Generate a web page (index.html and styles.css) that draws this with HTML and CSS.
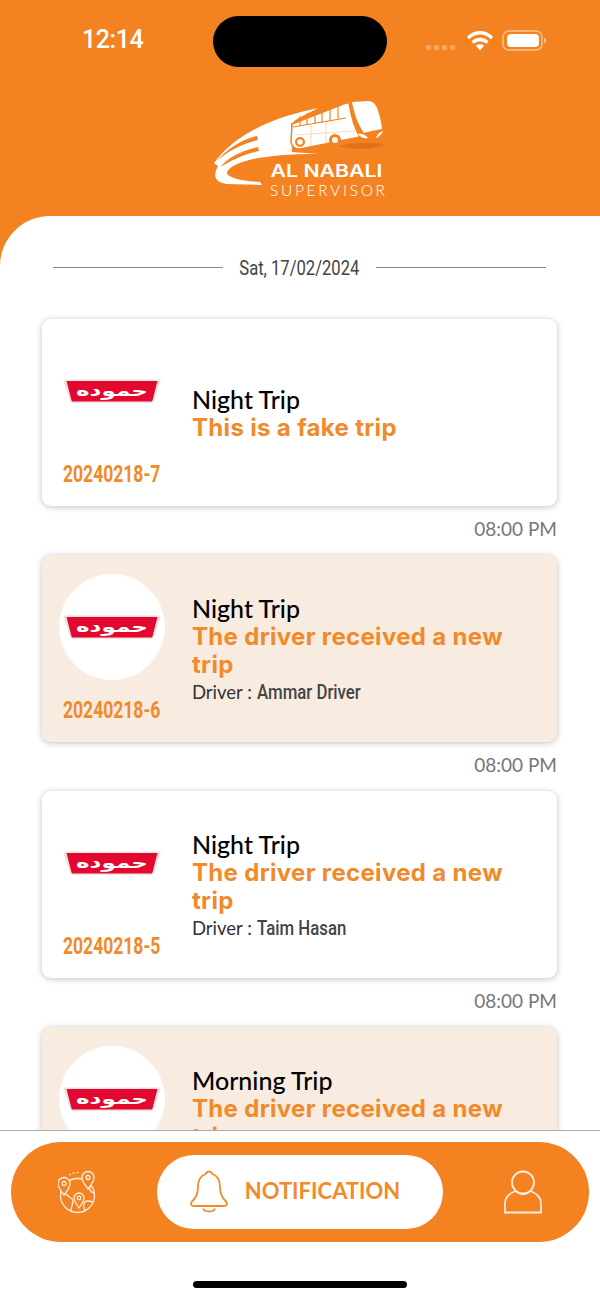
FILE: index.html
```html
<!DOCTYPE html>
<html lang="en">
<head>
  <meta charset="UTF-8" />
  <meta name="viewport" content="width=device-width, initial-scale=1.0"/>
  <title>Notification | Al Nabali Supervisor</title>
  <link rel="stylesheet" href="styles.css">
</head>
<body>

  <div class="screen">
    <header class="top">
      <div class="status">
        <span class="clock">12:14</span>
        <div class="island"></div>
        <div class="status-icons">
          <div class="signal"><i></i><i></i><i></i><i></i></div>
          <svg class="wifi" width="28" height="24" viewBox="0 0 28 24">
            <path d="M2 10C9 3 19 3 26 10M6.500 14.500C11 10.500 17 10.500 21.500 14.500" fill="none" stroke="#fff" stroke-width="3.400"/>
            <path d="M9.800 17.500C12.500 15.500 15.500 15.500 18.200 17.500L14 22.500Z" fill="#fff"/>
          </svg>
          <svg class="battery" width="46" height="24" viewBox="0 0 46 24">
            <rect x="1" y="3" width="39" height="19" rx="6" fill="none" stroke="#fbc48f" stroke-width="1.500"/>
            <rect x="5" y="6" width="32" height="13" rx="4" fill="#fff"/>
            <path d="M42 10C45 10.500 45 14.500 42 15Z" fill="#fbc48f"/>
          </svg>
        </div>
      </div>
      <svg class="brand" width="200" height="115" viewBox="200 90 200 115">
        <path d="M318 108C285 115 240 128 214 163L218 166C213 175 214 182 226 184L262 185L260 182C240 181 226 177 227 172C232 162 260 154 318 154L292 152L291 124L297 119Z" fill="#fff"/>
        <path d="M257 136C240 140 226 150 217 161C228 151 242 144 258 140ZM258 147C240 151 228 158 220 167C232 160 244 154 259 151Z" fill="#f58220"/>
        <path d="M340 146C355 142 372 143 384 144C375 150 350 150 340 146Z" fill="#e0701c"/>
        <path d="M292 124L346 103H349C351 115 354 128 360 137L300 149Q292 149 291 142Z" fill="#fff" stroke="#f58220" stroke-width="1.500"/>
        <path d="M352 102L369 101Q375 102 377 108C380 115 381 122 382 129C375 130 368 132 364 133C358 125 354 113 352 102Z" fill="#fff"/>
        <path d="M293 127L346 118M300 116V126M307 113V125M315 110V124M322 108V123M330 106V121M338 104V120" fill="none" stroke="#f58220" stroke-width="1.200"/>
        <path d="M295 135L355 131M311 126V146M326 122V144" fill="none" stroke="#f9c7a0" stroke-width=".7"/>
        <circle cx="300" cy="142" r="5" fill="#f58220"/><circle cx="300" cy="142" r="2.800" fill="#fff"/>
        <circle cx="335" cy="140" r="6" fill="#f58220"/><circle cx="335" cy="140" r="3" fill="#fff"/>
        <path d="M358 134C362 133 366 135 368 138C364 139 360 137 358 134ZM383 131C382 134 379 137 376 138C377 134 380 132 383 131Z" fill="#fff"/>
        <text x="270.500" y="177" class="brand-name" textLength="112" lengthAdjust="spacingAndGlyphs">AL NABALI</text>
        <text x="270" y="196" class="brand-sub" textLength="115" lengthAdjust="spacing">SUPERVISOR</text>
      </svg>
    </header>

    <main class="panel">
      <div class="date-row">
        <span class="date-line"></span>
        <span class="date-text">Sat, 17/02/2024</span>
        <span class="date-line"></span>
      </div>

      <div class="feed">
        <article class="card">
          <div class="card-left">
            <div class="logo-wrap">
              <svg class="client" viewBox="0 0 98 26">
                <path d="M2 1.500H96Q98 1.500 97.400 4L91 23Q90.400 25 88 25H10Q7.600 25 7 23L.6 4Q0 1.500 2 1.500Z" fill="#f0e3e0"/>
                <path d="M3.500 3H94.500L89.500 22.500Q89 23.500 88 23.500H10Q9 23.500 8.500 22.500Z" fill="#e3082f"/>
                <text x="49" y="18" class="logo-word" text-anchor="middle" textLength="72" lengthAdjust="spacingAndGlyphs">حموده</text>
              </svg>
            </div>
            <span class="code">20240218-7</span>
          </div>
          <div class="card-body">
            <h3>Night Trip</h3>
            <p class="msg">This is a fake trip</p>
          </div>
        </article>
        <div class="time">08:00 PM</div>

        <article class="card unread">
          <div class="card-left">
            <div class="logo-wrap">
              <svg class="client" viewBox="0 0 98 26">
                <path d="M2 1.500H96Q98 1.500 97.400 4L91 23Q90.400 25 88 25H10Q7.600 25 7 23L.6 4Q0 1.500 2 1.500Z" fill="#f0e3e0"/>
                <path d="M3.500 3H94.500L89.500 22.500Q89 23.500 88 23.500H10Q9 23.500 8.500 22.500Z" fill="#e3082f"/>
                <text x="49" y="18" class="logo-word" text-anchor="middle" textLength="72" lengthAdjust="spacingAndGlyphs">حموده</text>
              </svg>
            </div>
            <span class="code">20240218-6</span>
          </div>
          <div class="card-body">
            <h3>Night Trip</h3>
            <p class="msg">The driver received a new trip</p>
            <p class="driver">Driver : <b>Ammar Driver</b></p>
          </div>
        </article>
        <div class="time">08:00 PM</div>

        <article class="card">
          <div class="card-left">
            <div class="logo-wrap">
              <svg class="client" viewBox="0 0 98 26">
                <path d="M2 1.500H96Q98 1.500 97.400 4L91 23Q90.400 25 88 25H10Q7.600 25 7 23L.6 4Q0 1.500 2 1.500Z" fill="#f0e3e0"/>
                <path d="M3.500 3H94.500L89.500 22.500Q89 23.500 88 23.500H10Q9 23.500 8.500 22.500Z" fill="#e3082f"/>
                <text x="49" y="18" class="logo-word" text-anchor="middle" textLength="72" lengthAdjust="spacingAndGlyphs">حموده</text>
              </svg>
            </div>
            <span class="code">20240218-5</span>
          </div>
          <div class="card-body">
            <h3>Night Trip</h3>
            <p class="msg">The driver received a new trip</p>
            <p class="driver">Driver : <b>Taim Hasan</b></p>
          </div>
        </article>
        <div class="time">08:00 PM</div>

        <article class="card unread">
          <div class="card-left">
            <div class="logo-wrap">
              <svg class="client" viewBox="0 0 98 26">
                <path d="M2 1.500H96Q98 1.500 97.400 4L91 23Q90.400 25 88 25H10Q7.600 25 7 23L.6 4Q0 1.500 2 1.500Z" fill="#f0e3e0"/>
                <path d="M3.500 3H94.500L89.500 22.500Q89 23.500 88 23.500H10Q9 23.500 8.500 22.500Z" fill="#e3082f"/>
                <text x="49" y="18" class="logo-word" text-anchor="middle" textLength="72" lengthAdjust="spacingAndGlyphs">حموده</text>
              </svg>
            </div>
          </div>
          <div class="card-body">
            <h3>Morning Trip</h3>
            <p class="msg">The driver received a new trip</p>
            <p class="driver">Driver :</p>
          </div>
        </article>
      </div>
    </main>

    <footer class="bottom">
      <nav class="tabs">
        <svg class="tab-icon" width="38" height="44" viewBox="0 0 38 44" fill="none" stroke="#fdeedd" stroke-width="1.300">
          <circle cx="19.500" cy="25.500" r="17"/>
          <path d="M3 22C8 22 10 27 14 29C17 31 13 35 13 41M36 23C32 22 30 19 33 15M27 41C26 37 24 35 27 32C29 30 32 31 35 32"/>
          <path d="M6 25C2 20 0 17 0 13.500A6 6 0 0 1 12 13.500C12 17 10 20 6 25Z" fill="#f58220"/><circle cx="6" cy="13.500" r="2"/>
          <path d="M30 19C26 14 24 11 24 7.500A6 6 0 0 1 36 7.500C36 11 34 14 30 19Z" fill="#f58220"/><circle cx="30" cy="7.500" r="2"/>
          <path d="M21 38C17.500 33 16 30.500 16 28A5 5 0 0 1 26 28C26 30.500 24.500 33 21 38Z" fill="#f58220"/><circle cx="21" cy="28" r="1.800"/>
          <path d="M11 5C14 3 18 2 22 3" stroke-dasharray="2 2"/>
        </svg>
        <div class="tab-active">
          <svg width="38" height="44" viewBox="0 0 38 44" fill="none" stroke="#f08a2a" stroke-width="1.800" stroke-linejoin="round">
            <path d="M19 1.500C21 1.500 22 3 22.500 4C28 6 30 11 30 17C30 24 33 29 36.500 32C37.500 34.500 36.500 36 34 36H4C1.500 36 .5 34.500 1.500 32C5 29 8 24 8 17C8 11 10 6 15.500 4C16 3 17 1.500 19 1.500Z"/>
            <path d="M13 38.500C14.500 42.500 23.500 42.500 25 38.500"/>
          </svg>
          <span class="tab-label">NOTIFICATION</span>
        </div>
        <svg class="tab-icon" width="38" height="44" viewBox="0 0 38 44" fill="none" stroke="#fdeedd" stroke-width="1.800">
          <circle cx="19" cy="12.500" r="11"/>
          <path d="M12 21C5 23 1 28 1 33V42.500H37V33C37 28 33 23 26 21C23 25 15 25 12 21Z"/>
        </svg>
      </nav>
      <div class="home-bar"></div>
    </footer>
  </div>

</body>
</html>
```

FILE: styles.css
```css
/* Reset and Base Styles */
* {
  margin: 0;
  padding: 0;
  box-sizing: border-box;
}

body {
  width: 600px;
  height: 1300px;
  overflow: hidden;
  font-family: 'Lato', sans-serif;
  background: #fff;
}

.screen {
  display: flex;
  flex-direction: column;
  height: 1300px;
  background: #f58220;
}

/* Header */
.top {
  height: 216px;
  flex-shrink: 0;
  display: flex;
  flex-direction: column;
  align-items: center;
}

.status {
  width: 100%;
  height: 74px;
  padding: 16px 50px 0 82px;
  display: flex;
  align-items: flex-start;
}

.clock {
  width: 131px;
  margin-top: 8px;
  color: #fff;
  font-family: 'Roboto', sans-serif;
  font-size: 25px;
  font-weight: 500;
  line-height: 32px;
  letter-spacing: -0.4px;
}

.island {
  width: 174px;
  height: 51px;
  border-radius: 26px;
  background: #000;
}

.status-icons {
  margin-left: 39px;
  margin-top: 12px;
  display: flex;
  align-items: flex-start;
}

.signal {
  display: flex;
  gap: 3px;
  margin-top: 17px;
  margin-right: 11px;
}

.signal i {
  width: 5px;
  height: 5px;
  border-radius: 1px;
  background: #fba660;
}

.battery {
  margin-left: 8px;
}

.brand {
  margin-top: 16px;
}

.brand-name {
  fill: #fff;
  font-family: 'Inter', sans-serif;
  font-size: 17px;
  font-weight: 600;
}

.brand-sub {
  fill: #fff;
  font-family: 'Lato', sans-serif;
  font-size: 15.500px;
  font-weight: 300;
}

/* White panel */
.panel {
  flex: 1;
  min-height: 0;
  overflow: hidden;
  background: #fff;
  border-top-left-radius: 50px;
  padding: 0 43px 0 42px;
}

.date-row {
  height: 103px;
  padding: 0 11px;
  display: flex;
  align-items: center;
  justify-content: space-between;
}

.date-line {
  width: 170px;
  height: 1px;
  background: #888;
  margin-top: -1px;
}

/* no condensed family here, so Roboto gets squeezed */
.date-text {
  display: inline-block;
  color: #444;
  font-family: 'Roboto', sans-serif;
  font-size: 20px;
  white-space: nowrap;
  transform: scaleX(0.83);
}

.card {
  height: 187px;
  display: flex;
  background: #fff;
  border-radius: 9px;
  box-shadow: 0 1px 6px rgba(0, 0, 0, 0.25);
  padding: 19px 17px 0;
}

.card.unread {
  background: #f8ebe0;
}

.card-left {
  width: 106px;
  flex-shrink: 0;
  display: flex;
  flex-direction: column;
  align-items: center;
}

.logo-wrap {
  width: 106px;
  height: 106px;
  border-radius: 50%;
  background: #fff;
  display: flex;
  align-items: center;
  justify-content: center;
}

.client {
  width: 98px;
  height: 26px;
}

.logo-word {
  fill: #fff;
  font-family: 'DejaVu Sans', sans-serif;
  font-size: 16px;
  font-weight: 700;
}

.code {
  margin-top: 17px;
  color: #f08a2a;
  font-family: 'Roboto', sans-serif;
  font-size: 24px;
  font-weight: 700;
  line-height: 26px;
  white-space: nowrap;
  transform: scaleX(0.73);
}

.card-body {
  flex: 1;
  margin-left: 27px;
  align-self: center;
  margin-top: -16px;
}

.card-body h3 {
  color: #000;
  font-size: 25px;
  font-weight: 500;
  line-height: 26px;
  margin-bottom: 2px;
}

.msg {
  color: #f08a2a;
  font-family: 'Inter', sans-serif;
  font-size: 24px;
  font-weight: 700;
  line-height: 28px;
  letter-spacing: 0.33px;
}

.driver {
  color: #333;
  font-size: 18.500px;
  line-height: 26px;
}

.driver b {
  display: inline-block;
  color: #444;
  font-family: 'Roboto', sans-serif;
  font-size: 20px;
  font-weight: 500;
  transform: scaleX(0.84);
  transform-origin: left center;
}

.time {
  height: 49px;
  padding-top: 10px;
  text-align: right;
  color: #777;
  font-size: 19px;
  line-height: 26px;
}

/* Bottom bar */
.bottom {
  height: 170px;
  flex-shrink: 0;
  background: #fff;
  border-top: 1px solid #aaa;
  padding: 11px 11px 0;
}

.tabs {
  height: 100px;
  border-radius: 50px;
  background: #f58220;
  padding: 0 47px;
  display: flex;
  align-items: center;
  justify-content: space-between;
}

.tab-active {
  width: 286px;
  height: 74px;
  border-radius: 37px;
  background: #fff;
  padding-right: 10px;
  display: flex;
  align-items: center;
  justify-content: center;
  gap: 17px;
  color: #f08a2a;
  font-size: 22px;
  font-weight: 700;
}

.tab-label {
  margin-top: -3px;
}

.home-bar {
  width: 214px;
  height: 7px;
  margin: 39px auto 0;
  border-radius: 4px;
  background: #000;
}
```
